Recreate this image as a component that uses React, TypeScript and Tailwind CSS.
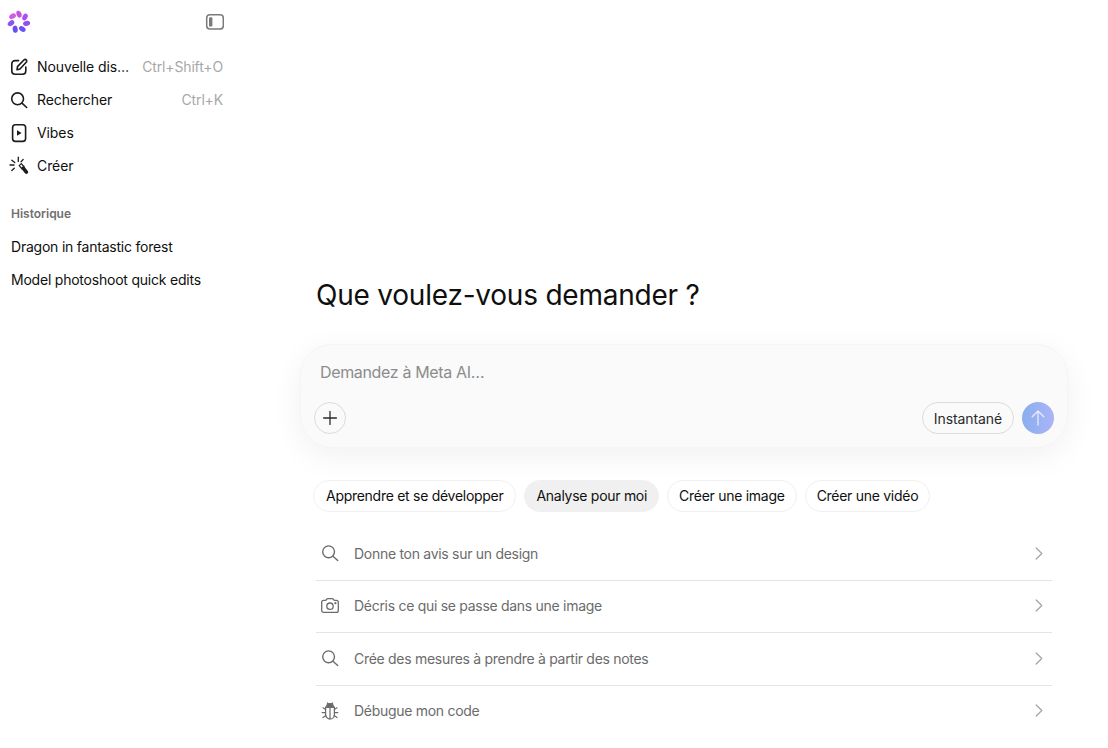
import { Plus } from "lucide-react";

const font = "font-['Inter',sans-serif]";

function Logo() {
  const petals = [
    { x: 12.6, y: 16.2, r: 60, c: "#d05ce6" },
    { x: 19, y: 14.2, r: -20, c: "#c850e4" },
    { x: 25, y: 17, r: 25, c: "#b04ff0" },
    { x: 26.6, y: 23.4, r: 75, c: "#9150f5" },
    { x: 22.3, y: 29, r: 125, c: "#6f50f5" },
    { x: 15.2, y: 29.2, r: 170, c: "#6450f5" },
    { x: 11, y: 23.2, r: 55, c: "#8a55f2" },
  ];
  return (
    <svg width="24" height="24" viewBox="7 10 24 24">
      {petals.map((p, i) => (
        <ellipse key={i} cx={p.x} cy={p.y} rx="2.5" ry="3.6" fill={p.c} transform={`rotate(${p.r} ${p.x} ${p.y})`} />
      ))}
    </svg>
  );
}

function SearchIcon({ color, width }: { color: string; width: number }) {
  return (
    <svg width="20" height="20" viewBox="0 0 20 20" fill="none" stroke={color} strokeWidth={width} strokeLinecap="round">
      <circle cx="8.6" cy="8.8" r="5.9" />
      <path d="M13 13.2l4.7 4.3" />
    </svg>
  );
}

function EditIcon() {
  return (
    <svg width="20" height="20" viewBox="0 0 20 20" fill="none" stroke="#1c1c1c" strokeWidth="1.6" strokeLinecap="round" strokeLinejoin="round">
      <path d="M9.6 3.6H6a3.2 3.2 0 0 0-3.2 3.2v7.2a3.2 3.2 0 0 0 3.2 3.2h7.6a3.2 3.2 0 0 0 3.2-3.2V10" />
      <path d="M8 12.8l.5-3.2 6.6-6.8a1.6 1.6 0 0 1 2.3 2.2l-6.4 7z" />
    </svg>
  );
}

function VibesIcon() {
  return (
    <svg width="20" height="20" viewBox="0 0 20 20" fill="none">
      <rect x="3.6" y="1.8" width="13" height="16.6" rx="2.8" stroke="#1c1c1c" strokeWidth="1.6" />
      <path d="M8 7.2v5.6l4.6-2.8z" fill="#1c1c1c" />
    </svg>
  );
}

function WandIcon() {
  return (
    <svg width="20" height="20" viewBox="0 0 20 20" fill="none" stroke="#1c1c1c" strokeLinecap="round" strokeWidth="1.3">
      <path d="M10.2 9.6l2.1-2 3 3.4-2.1 2z" strokeWidth="1.2" strokeLinejoin="round" />
      <path d="M14.2 12.2l3.2 4" strokeWidth="3.6" strokeLinecap="round" />
      <path d="M9.3 1.2v4.2M2.8 4.2l3 2.4M14.2 3.4l-2.1 2.3M1 9h4M2.8 14.6l2.5-2.3" />
    </svg>
  );
}

function ToggleIcon() {
  return (
    <svg width="20" height="20" viewBox="0 0 20 20" fill="none">
      <rect x="2.7" y="2.8" width="16.6" height="14.2" rx="3.2" stroke="#7a7a7a" strokeWidth="1.5" />
      <rect x="5" y="5.2" width="3.4" height="9.4" rx="1.2" fill="#7a7a7a" />
    </svg>
  );
}

function CameraIcon() {
  return (
    <svg width="20" height="20" viewBox="0 0 20 20" fill="none" stroke="#6b6b6b" strokeWidth="1.3">
      <path d="M3.6 4.4h1.7c.6 0 .9-.3 1.2-.8l.3-.5c.2-.3.5-.4.9-.4h4.6c.4 0 .7.1.9.4l.3.5c.3.5.6.8 1.2.8h1.7c1.1 0 1.9.8 1.9 1.9v8.1c0 1.1-.8 1.9-1.9 1.9H3.6c-1.1 0-1.9-.8-1.9-1.9V6.3c0-1.1.8-1.9 1.9-1.9z" />
      <circle cx="10" cy="10.2" r="3.2" />
      <circle cx="15.4" cy="7.2" r=".5" fill="#6b6b6b" />
    </svg>
  );
}

function BugIcon() {
  return (
    <svg width="20" height="20" viewBox="0 0 20 20" fill="none" stroke="#6b6b6b" strokeWidth="1.2" strokeLinecap="round">
      <path d="M6.6 6.2c0-2 1.5-3.6 3.4-3.6s3.4 1.6 3.4 3.6z" fill="#6b6b6b" />
      <path d="M5.6 6.2h8.8v7.2c0 2.6-2 4.6-4.4 4.6s-4.4-2-4.4-4.6z" />
      <path d="M10 6.2V18M7.4 2l1 1.2M12.6 2l-1 1.2M5.6 8.4L3 6.8M14.4 8.4L17 6.8M5.6 11.6H2.2M14.4 11.6h3.4M5.8 14.6L3 16.6M14.2 14.6L17 16.6" />
    </svg>
  );
}

const nav = [
  { icon: <EditIcon />, label: "Nouvelle dis…", kbd: "Ctrl+Shift+O" },
  { icon: <SearchIcon color="#1c1c1c" width={1.6} />, label: "Rechercher", kbd: "Ctrl+K" },
  { icon: <VibesIcon />, label: "Vibes" },
  { icon: <WandIcon />, label: "Créer" },
];

const chips = ["Apprendre et se développer", "Analyse pour moi", "Créer une image", "Créer une vidéo"];

const prompts = [
  { icon: <SearchIcon color="#6b6b6b" width={1.4} />, label: "Donne ton avis sur un design" },
  { icon: <CameraIcon />, label: "Décris ce qui se passe dans une image" },
  { icon: <SearchIcon color="#6b6b6b" width={1.4} />, label: "Crée des mesures à prendre à partir des notes" },
  { icon: <BugIcon />, label: "Débugue mon code" },
];

export default function App() {
  return (
    <div className={`flex h-[748px] w-[1108px] overflow-hidden bg-white text-[14px] tracking-[-0.22px] text-[#0f0f0f] ${font}`}>
      <aside className="w-[260px] shrink-0 pr-9">
        <div className="flex h-[44px] items-center justify-between pl-[7px]">
          <Logo />
          <ToggleIcon />
        </div>
        <nav className="mt-[6px]">
          {nav.map((n) => (
            <div key={n.label} className="flex h-[33px] items-center pl-[9px]">
              <span className="mr-2 flex w-[20px] justify-center">{n.icon}</span>
              <span className="flex-1 tracking-[-0.1px]">{n.label}</span>
              {n.kbd && <span className="pr-px tracking-[-0.15px] text-[#a8a8a8]">{n.kbd}</span>}
            </div>
          ))}
        </nav>
        <div className="mt-[23px] pl-[11px] text-[12px] font-semibold leading-[18px] tracking-normal text-[#6f6f6f]">Historique</div>
        <div className="mt-[7px] pl-[11px]">
          <div className="flex h-[33px] items-center">Dragon in fantastic forest</div>
          <div className="flex h-[33px] items-center">Model photoshoot quick edits</div>
        </div>
      </aside>

      <main className="flex-1 pl-10 pr-10 pt-[275px]">
        <h1 className="pl-4 text-[28px] font-normal leading-[40px] tracking-[-0.22px]">Que voulez-vous demander ?</h1>
        <div className="mt-[29px] flex h-[104px] flex-col justify-between rounded-[32px] border border-[#f5f5f5] bg-[#fafafa] pb-[13px] pl-[13px] pr-[13px] pt-[15px] shadow-[0_8px_32px_rgba(0,0,0,0.06)]">
          <div className="pl-[6px] text-[16px] leading-[24px] tracking-[-0.35px] text-[#8c8c8c]">Demandez à Meta AI…</div>
          <div className="flex items-center justify-between">
            <button className="flex h-8 w-8 items-center justify-center rounded-full border border-[#dcdcdc]">
              <Plus size={22} strokeWidth={1.4} color="#2a2a2a" />
            </button>
            <div className="flex items-center gap-2">
              <button className="flex h-8 items-center rounded-full border border-[#dcdcdc] px-[11px] tracking-[-0.1px] text-[#2a2a2a]">Instantané</button>
              <button className="flex h-8 w-8 items-center justify-center rounded-full bg-gradient-to-r from-[#89aeee] to-[#aab4f8]">
                <svg width="20" height="20" viewBox="0 0 20 20" fill="none" stroke="#e8ecfc" strokeWidth="1.3" strokeLinecap="round" strokeLinejoin="round">
                  <path d="M10 3v14M4.2 8.8L10 3l5.8 5.8" />
                </svg>
              </button>
            </div>
          </div>
        </div>
        <div className="mt-8 flex gap-2 pl-[13px]">
          {chips.map((c) => (
            <div
              key={c}
              className={`flex h-8 items-center rounded-full border px-[11px] first:px-3 pb-px tracking-[-0.28px] ${c === "Analyse pour moi" ? "border-[#f0f0f0] bg-[#f0f0f0]" : "border-[#f0f0f0]"}`}
            >
              {c}
            </div>
          ))}
        </div>
        <div className="mt-[16px] px-4">
          {prompts.map((p, i) => (
            <div key={p.label} className={`flex items-center pb-px ${i < prompts.length - 1 ? "h-[52.6px] border-b border-[#e4e4e4]" : "h-[51px]"}`}>
              <span className="ml-[4px] mr-[14px] flex w-[20px] justify-center">{p.icon}</span>
              <span className="flex-1 tracking-[-0.29px] text-[#6b6b6b]">{p.label}</span>
              <svg width="8" height="13" viewBox="0 0 8 13" fill="none" stroke="#a3a3a3" strokeWidth="1.2" strokeLinecap="round" strokeLinejoin="round" className="mr-[9.5px]">
                <path d="M1.2 1l5.6 5.5-5.6 5.5" />
              </svg>
            </div>
          ))}
        </div>
      </main>
    </div>
  );
}
